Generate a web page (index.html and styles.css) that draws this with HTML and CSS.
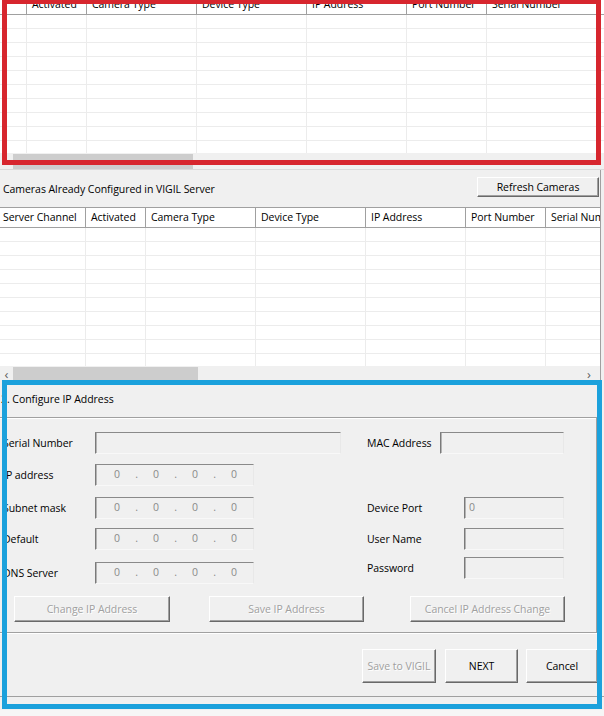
FILE: index.html
```html
<!DOCTYPE html>
<html>
<head>
<meta charset="utf-8">
<title>VIGIL Camera Setup</title>
<link rel="stylesheet" href="styles.css">
</head>
<body>
<div class="page">

  <div class="found-area">
    <div class="grid grid-found">
      <div class="grid-head">
        <div class="hc c-blank"></div>
        <div class="hc c-act">Activated</div>
        <div class="hc c-cam">Camera Type</div>
        <div class="hc c-dev">Device Type</div>
        <div class="hc c-ip">IP Address</div>
        <div class="hc c-port">Port Number</div>
        <div class="hc c-ser">Serial Number</div>
      </div>
      <div class="grid-body">
        <div class="col c-blank"></div>
        <div class="col c-act"></div>
        <div class="col c-cam"></div>
        <div class="col c-dev"></div>
        <div class="col c-ip"></div>
        <div class="col c-port"></div>
        <div class="col c-ser"></div>
      </div>
      <div class="hscroll">
        <span class="sarrow"></span>
        <div class="thumb"></div>
        <span class="sarrow right">&#x203A;</span>
      </div>
    </div>
  </div>

  <div class="configured">
    <div class="toolbar">
      <span class="caption">Cameras Already Configured in VIGIL Server</span>
      <button class="btn btn-refresh">Refresh Cameras</button>
    </div>
    <div class="grid grid-conf">
      <div class="grid-head">
        <div class="hc c-chan">Server Channel</div>
        <div class="hc c-act">Activated</div>
        <div class="hc c-cam">Camera Type</div>
        <div class="hc c-dev">Device Type</div>
        <div class="hc c-ip">IP Address</div>
        <div class="hc c-port">Port Number</div>
        <div class="hc c-ser">Serial Number</div>
      </div>
      <div class="grid-body">
        <div class="col c-chan"></div>
        <div class="col c-act"></div>
        <div class="col c-cam"></div>
        <div class="col c-dev"></div>
        <div class="col c-ip"></div>
        <div class="col c-port"></div>
        <div class="col c-ser"></div>
      </div>
      <div class="hscroll">
        <span class="sarrow">&#x2039;</span>
        <div class="thumb"></div>
        <span class="sarrow right">&#x203A;</span>
      </div>
    </div>
  </div>

  <div class="config-ip">
    <div class="section-title">2. Configure IP Address</div>
    <div class="groupbox">
      <div class="frow r1">
        <div class="fleft">
          <span class="flabel">Serial Number</span>
          <div class="field f-serial"></div>
        </div>
        <div class="fright">
          <span class="rlabel rl-mac">MAC Address</span>
          <div class="field f-mac"></div>
        </div>
      </div>
      <div class="frow r2">
        <div class="fleft">
          <span class="flabel">IP address</span>
          <div class="field ipfield"><span class="oct">0</span><span class="dot">.</span><span class="oct">0</span><span class="dot">.</span><span class="oct">0</span><span class="dot">.</span><span class="oct">0</span></div>
        </div>
      </div>
      <div class="frow r3">
        <div class="fleft">
          <span class="flabel">Subnet mask</span>
          <div class="field ipfield"><span class="oct">0</span><span class="dot">.</span><span class="oct">0</span><span class="dot">.</span><span class="oct">0</span><span class="dot">.</span><span class="oct">0</span></div>
        </div>
        <div class="fright">
          <span class="rlabel">Device Port</span>
          <div class="field f-small"><span class="fval">0</span></div>
        </div>
      </div>
      <div class="frow r4">
        <div class="fleft">
          <span class="flabel">Default</span>
          <div class="field ipfield"><span class="oct">0</span><span class="dot">.</span><span class="oct">0</span><span class="dot">.</span><span class="oct">0</span><span class="dot">.</span><span class="oct">0</span></div>
        </div>
        <div class="fright">
          <span class="rlabel">User Name</span>
          <div class="field f-small"></div>
        </div>
      </div>
      <div class="frow r5">
        <div class="fleft">
          <span class="flabel">DNS Server</span>
          <div class="field ipfield"><span class="oct">0</span><span class="dot">.</span><span class="oct">0</span><span class="dot">.</span><span class="oct">0</span><span class="dot">.</span><span class="oct">0</span></div>
        </div>
        <div class="fright up">
          <span class="rlabel">Password</span>
          <div class="field f-small"></div>
        </div>
      </div>
      <div class="btnrow">
        <button class="btn btn-wide b-change" disabled>Change IP Address</button>
        <button class="btn btn-wide b-save" disabled>Save IP Address</button>
        <button class="btn btn-wide b-cancelip" disabled>Cancel IP Address Change</button>
      </div>
    </div>
    <div class="footer">
      <button class="btn btn-foot b-vigil" disabled>Save to VIGIL</button>
      <button class="btn btn-foot b-next">NEXT</button>
      <button class="btn btn-foot b-cancel">Cancel</button>
    </div>
  </div>

  <div class="annot annot-red"></div>
  <div class="annot annot-blue"></div>
</div>
</body>
</html>
```
FILE: styles.css
```css
* { box-sizing: border-box; }

body {
  margin: 0;
  background: #f4f4f4;
  font-family: "Open Sans", "Noto Sans", sans-serif;
  font-size: 10.5px;
  letter-spacing: -0.05px;
  color: #000;
}

.page {
  position: relative;
  width: 604px;
  height: 716px;
  overflow: hidden;
  background: #f0f0f0;
}

/* ---------- grids ---------- */
.grid { background: #fff; overflow: hidden; }

.grid-head {
  display: flex;
  height: 21px;
  border-top: 1px solid #a0a0a0;
  border-bottom: 1px solid #a0a0a0;
  background: #fff;
  white-space: nowrap;
}
.hc {
  flex: none;
  height: 19px;
  line-height: 19px;
  padding-left: 5px;
  border-right: 1px solid #a0a0a0;
  box-shadow: inset -1px 0 0 #fff;
  overflow: hidden;
}
.grid-body {
  display: flex;
  background: repeating-linear-gradient(to bottom, #fff 0 13px, #ececec 13px 14px);
}
.col { flex: none; border-right: 1px solid #ececec; }

.c-blank { width: 27px; }
.c-chan { width: 86px; padding-left: 3px; }
.c-act { width: 60px; }
.c-cam { width: 110px; }
.c-dev { width: 110px; }
.c-ip { width: 100px; }
.c-port { width: 80px; }
.c-ser { width: 120px; }

.hscroll {
  display: flex;
  align-items: center;
  height: 16px;
  background: #f0f0f0;
}
.sarrow {
  flex: none;
  width: 13px;
  text-align: center;
  font-size: 13px;
  line-height: 14px;
  color: #606060;
}
.sarrow.right { margin-left: auto; width: 22px; }
.thumb { flex: none; width: 185px; height: 15px; background: #cdcdcd; }

/* top (found cameras) grid */
.found-area {
  height: 170px;
  overflow: hidden;
  border-bottom: 1px solid #dadada;
}
.grid-found { margin-top: -6px; }
.grid-found .grid-body { height: 138px; }
.grid-found .thumb { width: 180px; }

/* configured cameras */
.configured {
  height: 211px;
  border-right: 1px solid #a0a0a0;
  margin-right: 3px;
}
.toolbar {
  display: flex;
  justify-content: space-between;
  align-items: flex-start;
  height: 37px;
  padding: 7px 1px 0 3px;
}
.caption { margin-top: 5px; line-height: 14px; }
.btn-refresh { width: 122px; height: 20px; }
.grid-conf .grid-body { height: 138px; }

/* ---------- buttons ---------- */
.btn {
  font-family: inherit;
  font-size: 10.5px;
  letter-spacing: -0.05px;
  color: #000;
  background: #f0f0f0;
  border: 1px solid;
  border-color: #fff #696969 #696969 #fff;
  box-shadow: inset -1px -1px 0 #a0a0a0;
  padding: 0;
  margin: 0;
}
.btn:disabled { color: #a0a0a0; text-shadow: 1px 1px 0 #fff; }

/* ---------- configure ip ---------- */
.config-ip { height: 329px; }
.section-title {
  height: 36px;
  padding: 11px 0 0 1px;
  line-height: 14px;
}
.groupbox {
  height: 216px;
  margin-right: 7px;
  border-top: 1px solid #a0a0a0;
  border-bottom: 1px solid #a0a0a0;
  border-right: 1px solid #a0a0a0;
  box-shadow: 0 1px 0 #fff, inset 0 1px 0 #fff;
  padding-top: 14px;
}
.frow {
  display: flex;
  align-items: flex-start;
  height: 22px;
}
.r2 { margin-top: 10px; }
.r3 { margin-top: 11px; }
.r4 { margin-top: 9px; }
.r5 { margin-top: 12px; }
.fleft {
  flex: none;
  width: 367px;
  display: flex;
  align-items: center;
  height: 22px;
}
.flabel { width: 95px; padding-left: 3px; line-height: 14px; }
.fright {
  display: flex;
  align-items: center;
  height: 22px;
}
.fright.up { margin-top: -5px; }
.rlabel { width: 97px; line-height: 14px; }
.rl-mac { width: 73px; }

.field {
  height: 22px;
  background: #f0f0f0;
  border: 1px solid;
  border-color: #8a8a8a #e8e8e8 #f8f8f8 #7a7a7a;
  box-shadow: inset 1px 0 0 #b4b4b4;
}
.f-serial { width: 246px; }
.f-mac { width: 124px; }
.f-small { width: 100px; padding-left: 4px; line-height: 19px; }
.fval { color: #8a8a8a; }

.ipfield {
  width: 159px;
  display: flex;
  padding-left: 8px;
  line-height: 19px;
  color: #8a8a8a;
}
.oct { width: 26px; text-align: center; }
.dot { width: 13px; text-align: center; }

.btnrow {
  display: flex;
  margin-top: 12px;
  padding-left: 14px;
}
.btn-wide { height: 26px; width: 156px; }
.b-save { margin-left: 39px; width: 155px; }
.b-cancelip { margin-left: 46px; width: 155px; }

.footer {
  height: 64px;
  border-bottom: 1px solid #a0a0a0;
  display: flex;
  justify-content: flex-end;
  padding: 16px 6px 0 0;
}
.btn-foot { height: 34px; width: 73px; }
.b-vigil { width: 74px; }
.b-next { margin-left: 9px; }
.b-cancel { margin-left: 8px; width: 72px; }

.page::after {
  content: "";
  display: block;
  height: 20px;
  background: #f6f6f6;
}

/* ---------- annotation overlays ---------- */
.annot {
  position: absolute;
  border: 5px solid;
  pointer-events: none;
}
.annot-red {
  left: 2px;
  top: -1px;
  width: 599px;
  height: 166px;
  border-color: #d7262e;
}
.annot-blue {
  left: 2px;
  top: 380px;
  width: 600px;
  height: 329px;
  border-color: #1ba1dc;
}
```
